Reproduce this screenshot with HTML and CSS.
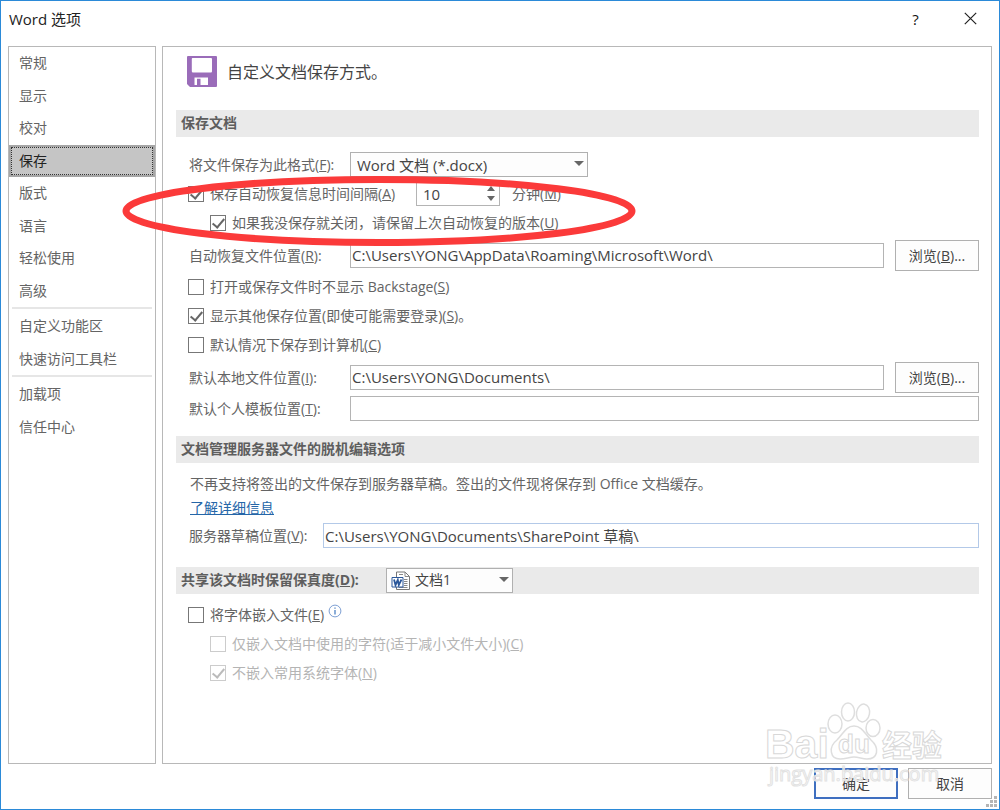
FILE: index.html
```html
<!DOCTYPE html>
<html lang="zh-CN">
<head>
<meta charset="utf-8">
<title>Word 选项</title>
<link rel="stylesheet" href="styles.css">
</head>
<body>
<div class="window">
  <header class="titlebar">
    <h1 class="title">Word 选项</h1>
    <button class="title-btn" type="button" aria-label="帮助">?</button>
    <button class="title-btn" type="button" aria-label="关闭"><svg width="13" height="13" viewBox="0 0 13 13"><path d="M.8 .8L12.2 12.2M12.2 .8L.8 12.2" stroke="#222" stroke-width="1.2"/></svg></button>
  </header>
  <div class="content">
    <nav class="sidebar">
      <ul class="nav-group nav-main">
        <li><a href="#general">常规</a></li>
        <li><a href="#display">显示</a></li>
        <li><a href="#proof">校对</a></li>
        <li><a href="#save" class="active" aria-current="page">保存</a></li>
        <li><a href="#layout">版式</a></li>
        <li><a href="#language">语言</a></li>
        <li><a href="#ease">轻松使用</a></li>
        <li><a href="#advanced">高级</a></li>
      </ul>
      <ul class="nav-group">
        <li><a href="#ribbon">自定义功能区</a></li>
        <li><a href="#qat">快速访问工具栏</a></li>
      </ul>
      <ul class="nav-group">
        <li><a href="#addins">加载项</a></li>
        <li><a href="#trust">信任中心</a></li>
      </ul>
    </nav>
    <main class="panel">
      <div class="intro">
        <svg width="30" height="31" viewBox="0 0 30 31"><path fill="#9a6cb9" fill-rule="evenodd" d="M1 0H29Q30 0 30 1V30Q30 31 29 31H3L0 28V1Q0 0 1 0ZM5.500 2Q4.800 2 4.800 3V15.200Q4.800 16.500 6 16.500H24Q25 16.500 25 15.200V3Q25 2 24 2ZM7.500 21.500V29H21V21.500ZM10 22.800H13.500V29H10Z"/></svg>
        <p>自定义文档保存方式。</p>
      </div>

      <h2 class="section">保存文档</h2>
      <div class="rows">
        <div class="row">
          <label class="caption" for="format">将文件保存为此格式(<u>F</u>):</label>
          <span class="select format"><select id="format"><option>Word 文档 (*.docx)</option></select><svg class="arrow" width="10" height="5"><path d="M0 0H10L5 5Z" fill="#666"/></svg></span>
        </div>
        <div class="row">
          <input type="checkbox" id="auto" checked><label for="auto" class="interval">保存自动恢复信息时间间隔(<u>A</u>)</label>
          <span class="spin"><input id="minutes" type="text" value="10"><span class="spin-btns"><button type="button" aria-label="增加"><svg width="8" height="5"><path d="M0 5H8L4 0Z" fill="#666"/></svg></button><button type="button" aria-label="减少"><svg width="8" height="5"><path d="M0 0H8L4 5Z" fill="#666"/></svg></button></span></span>
          <label for="minutes">分钟(<u>M</u>)</label>
        </div>
        <div class="row nested">
          <input type="checkbox" id="keep" checked><label for="keep">如果我没保存就关闭，请保留上次自动恢复的版本(<u>U</u>)</label>
        </div>
        <div class="row tall">
          <label class="caption" for="recover">自动恢复文件位置(<u>R</u>):</label>
          <input class="field" type="text" id="recover" value="C:\Users\YONG\AppData\Roaming\Microsoft\Word\">
          <button class="btn" type="button">浏览(<u>B</u>)...</button>
        </div>
        <div class="row">
          <input type="checkbox" id="backstage"><label for="backstage">打开或保存文件时不显示 Backstage(<u>S</u>)</label>
        </div>
        <div class="row">
          <input type="checkbox" id="places" checked><label for="places">显示其他保存位置(即使可能需要登录)(<u>S</u>)。</label>
        </div>
        <div class="row">
          <input type="checkbox" id="computer"><label for="computer">默认情况下保存到计算机(<u>C</u>)</label>
        </div>
        <div class="row tall">
          <label class="caption" for="local">默认本地文件位置(<u>I</u>):</label>
          <input class="field" type="text" id="local" value="C:\Users\YONG\Documents\">
          <button class="btn" type="button">浏览(<u>B</u>)...</button>
        </div>
        <div class="row">
          <label class="caption" for="tpl">默认个人模板位置(<u>T</u>):</label>
          <input class="field" type="text" id="tpl" value="">
        </div>
      </div>

      <h2 class="section">文档管理服务器文件的脱机编辑选项</h2>
      <div class="rows compact">
        <p class="row">不再支持将签出的文件保存到服务器草稿。签出的文件现将保存到 Office 文档缓存。</p>
        <p class="link-row"><a href="#more">了解详细信息</a></p>
        <div class="row">
          <label class="draft" for="draft">服务器草稿位置(<u>V</u>):</label>
          <input class="field blue" type="text" id="draft" value="C:\Users\YONG\Documents\SharePoint 草稿\">
        </div>
      </div>

      <div class="section">
        <label class="share" for="doc">共享该文档时保留保真度(<u>D</u>):</label>
        <span class="select doc"><select id="doc"><option>文档1</option></select><svg class="doc-icon" width="20" height="20" viewBox="0 0 20 20"><path d="M5.500 1H14L18.500 5.500V18.500H5.500Z" fill="#fff" stroke="#777"/><path d="M14 1V5.500H18.500M8 3.500H12M13 8.500H16.500M13 10.500H16.500M13 12.500H16.500M13 14.500H16.500M8 16.500H16.500" fill="none" stroke="#888"/><path d="M1 6.500H12V16H1Z" fill="#fff" stroke="#2b579a"/><path d="M3 8.500L4.500 14L6.800 9L7.800 14L10.500 8.500" fill="none" stroke="#2b579a" stroke-width="1.800"/></svg><svg class="arrow" width="10" height="5"><path d="M0 0H10L5 5Z" fill="#666"/></svg></span>
      </div>
      <div class="rows compact">
        <div class="row">
          <input type="checkbox" id="embed"><label for="embed">将字体嵌入文件(<u>E</u>)</label>
          <svg class="info" width="14" height="14" viewBox="0 0 14 14"><circle cx="7" cy="7" r="5.900" fill="none" stroke="#7d9fd3"/><path d="M7 6V10.500M7 3.500V4.800" stroke="#3f78bf" stroke-width="1.200"/></svg>
        </div>
        <div class="row nested off">
          <input type="checkbox" id="used" disabled><label for="used">仅嵌入文档中使用的字符(适于减小文件大小)(<u>C</u>)</label>
        </div>
        <div class="row nested off">
          <input type="checkbox" id="common" checked disabled><label for="common">不嵌入常用系统字体(<u>N</u>)</label>
        </div>
      </div>
    </main>
  </div>
  <footer class="footer">
    <button class="btn primary" type="button">确定</button>
    <button class="btn" type="button">取消</button>
  </footer>
  <svg class="grip" width="11" height="11" viewBox="0 0 11 11" fill="#b5b5b5"><path d="M8 0h3v3h-3zM4 4h3v3h-3zM8 4h3v3h-3zM0 8h3v3h-3zM4 8h3v3h-3zM8 8h3v3h-3z"/></svg>
  <svg class="mark" width="516" height="72" viewBox="0 0 516 72"><ellipse cx="258" cy="36" rx="253" ry="31.500" fill="none" stroke="#fb3a3a" stroke-width="7"/></svg>
  <svg class="watermark" width="190" height="90" viewBox="0 0 190 90">
    <g fill="#fff" fill-opacity=".7" stroke="#dedede" stroke-width="1.500">
      <ellipse cx="74" cy="44" rx="7" ry="9"/>
      <ellipse cx="87" cy="32" rx="6.500" ry="9"/>
      <ellipse cx="102" cy="33" rx="6.500" ry="9" transform="rotate(10 102 33)"/>
      <ellipse cx="112" cy="48" rx="7" ry="8.500"/>
      <path d="M93 46C85 46 82 54 76 60C67 67 69 79 79 79C85 79 88 77 93 77C98 77 101 79 106 79C117 79 119 68 110 60C104 54 101 46 93 46Z"/>
    </g>
    <g class="wm-text">
      <text x="4" y="78" font-size="41">Bai</text>
      <text x="77" y="73" font-size="26">du</text>
      <text x="121" y="76" font-size="30">经验</text>
      <text class="wm-url" x="8" y="101" font-size="20">jingyan.baidu.com</text>
    </g>
  </svg>
</div>
</body>
</html>
```
FILE: styles.css
```css
* { box-sizing: border-box; }
body {
  margin: 0;
  font-family: "Open Sans", "Noto Sans CJK SC", sans-serif;
  font-size: 14px;
  line-height: 20px;
  color: #646464;
}
h1, h2, p, ul { margin: 0; padding: 0; font-weight: 400; }
input, select, button { font: inherit; color: inherit; margin: 0; }
.window {
  position: relative;
  display: flex;
  flex-direction: column;
  min-height: 100vh;
  border: 1px solid #2b8ad8;
  background: #fff;
}
.titlebar { display: flex; align-items: center; height: 45px; padding: 0 14px 10px 8px; }
.title { flex: 1; font-size: 15px; color: #222; }
.title-btn {
  display: flex; align-items: center; justify-content: center;
  width: 29px; height: 30px; margin-left: 26px; padding: 0;
  border: 0; background: none; font-size: 15px; color: #111;
}
.content { flex: 1; display: flex; gap: 6px; padding: 0 7px; }
.sidebar { width: 148px; border: 1px solid #b8b8b8; }
.nav-group { display: flex; flex-direction: column; height: 65px; list-style: none; }
.nav-group + .nav-group { margin-top: 3px; position: relative; }
.nav-group + .nav-group::before {
  content: ""; position: absolute; left: 3px; right: 3px; top: -3px; height: 2px; background: #e6e6e6;
}
.nav-main { height: 260px; }
.nav-group li { flex: 1; display: flex; }
.nav-group a {
  flex: 1; display: flex; align-items: center; padding: 0 10px;
  color: #646464; text-decoration: none;
}
.nav-group .active {
  background: #c5c5c5; color: #222; border: 2px solid #a6a6a6; padding: 0 8px;
  outline: 1px dotted #333; outline-offset: -3px;
}
.panel { flex: 1; border: 1px solid #b8b8b8; padding: 9px 12px 9px 13px; }
.intro { display: flex; align-items: center; gap: 10px; padding: 0 11px; height: 31px; margin-bottom: 23px; font-size: 16px; color: #444; }
.section {
  display: flex; align-items: center; height: 27px; padding: 0 5px 1px;
  background: #eaeaea; font-size: 14px; font-weight: 700; color: #5e5e5e;
}
.rows { padding: 13px 0 13px 12px; }
.compact { padding-top: 6px; padding-bottom: 17px; }
.row { display: flex; align-items: center; min-height: 29px; }
.nested { padding-left: 22px; }
.tall { margin: 3px 0 1px; min-height: 31px; }
.caption { width: 162px; padding-left: 1px; }
.draft { width: 135px; padding-left: 1px; }
p.row, .link-row { padding-left: 2px; }
.link-row { height: 23px; }
.link-row a { color: #2566a8; }
.row input[type="checkbox"] {
  appearance: none; position: relative; flex: none; width: 16px; height: 16px; margin-right: 6px;
  border: 1px solid #777; background: #fff;
}
input[type="checkbox"]:checked::before {
  content: ""; position: absolute; left: 4px; top: 0; width: 5px; height: 10px;
  border: solid #666; border-width: 0 2px 2px 0; transform: rotate(40deg);
}
.row.off { color: #b4b4b4; }
.row.off input[type="checkbox"] { border-color: #ccc; }
.row.off input:checked::before { border-color: #bbb; }
.field {
  flex: 1; min-width: 0; height: 25px; padding: 0 1px 1px; border: 1px solid #b4b4b4;
  background: #fff; font-size: 15px; color: #444;
}
.blue { border-color: #b3c9e8; }
.btn {
  width: 84px; height: 31px; padding: 0; border: 1px solid #b0b0b0; background: #fdfdfd; color: #444;
}
.row .btn { margin-left: 11px; }
.select { position: relative; display: flex; height: 25px; }
.select select {
  appearance: none; width: 100%; padding: 0 20px 0 6px;
  border: 1px solid #b0b0b0; border-radius: 0; background: #fdfdfd; color: #444;
}
.arrow { position: absolute; right: 4px; top: 9px; pointer-events: none; }
.format { width: 238px; font-size: 15px; }
.share { width: 205px; }
.doc { width: 127px; font-weight: 400; }
.doc select { padding-left: 28px; }
.doc-icon { position: absolute; left: 5px; top: 3px; pointer-events: none; }
.interval { width: 206px; }
.spin { display: flex; width: 84px; height: 25px; margin-right: 12px; border: 1px solid #b4b4b4; background: #fff; }
.spin input { flex: 1; min-width: 0; border: 0; padding: 0 6px; background: none; font-size: 15px; color: #444; }
.spin-btns { display: flex; flex-direction: column; width: 17px; padding: 2px 0; }
.spin-btns button { flex: 1; display: flex; align-items: center; justify-content: center; padding: 0; border: 0; background: none; }
.info { align-self: flex-start; margin-left: 4px; margin-top: 4px; }
.footer { display: flex; justify-content: flex-end; gap: 10px; padding: 4px 7px 10px; }
.primary { border: 2px solid #3f6fc0; }
.grip { position: absolute; right: 2px; bottom: 2px; }
.mark { position: absolute; left: 120px; top: 174px; pointer-events: none; }
.watermark { position: absolute; right: 48px; bottom: 39px; overflow: visible; pointer-events: none; }
.wm-text {
  font-family: "Liberation Sans", "Noto Sans CJK SC", sans-serif; font-weight: 700;
  fill: #fff; stroke: #d8d8d8; stroke-width: 1px;
}
.wm-url { font-family: "Open Sans", sans-serif; font-weight: 400; fill-opacity: .6; stroke: #e2e2e2; }
```
